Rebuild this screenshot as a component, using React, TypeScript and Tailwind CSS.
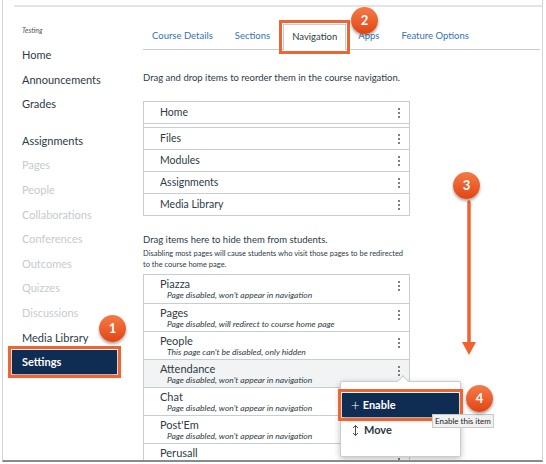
import React from "react";

const font = { fontFamily: "Lato, 'Open Sans', sans-serif" };

function Kebab() {
  return (
    <div className="flex flex-col items-center gap-[2px]">
      <span className="block w-[2px] h-[2px] rounded-full bg-[#555]" />
      <span className="block w-[2px] h-[2px] rounded-full bg-[#555]" />
      <span className="block w-[2px] h-[2px] rounded-full bg-[#555]" />
    </div>
  );
}

function Badge({ n, className }: { n: string; className: string }) {
  return (
    <div
      className={
        "absolute w-[27px] h-[27px] rounded-full bg-gradient-to-b from-[#f47a45] to-[#e1440f] text-white text-[13px] font-bold flex items-center justify-center shadow-[0_2px_3px_rgba(0,0,0,0.35)] " +
        className
      }
    >
      {n}
    </div>
  );
}

const sideTop = ["Home", "Announcements", "Grades"];
const sideMid = [
  { t: "Assignments", on: true },
  { t: "Pages", on: false },
  { t: "People", on: false },
  { t: "Collaborations", on: false },
  { t: "Conferences", on: false },
  { t: "Outcomes", on: false },
  { t: "Quizzes", on: false },
  { t: "Discussions", on: false },
  { t: "Media Library", on: true },
];

const hidden = [
  { t: "Piazza", s: "Page disabled, won't appear in navigation" },
  { t: "Pages", s: "Page disabled, will redirect to course home page" },
  { t: "People", s: "This page can't be disabled, only hidden" },
  { t: "Attendance", s: "Page disabled, won't appear in navigation", hl: true },
  { t: "Chat", s: "Page disabled, won't appear in navigation" },
  { t: "Post'Em", s: "Page disabled, won't appear in navigation" },
  { t: "Perusall", s: "Page disabled, won't appear in navigation" },
];

export default function App() {
  return (
    <div className="w-[546px] h-[464px] bg-white pl-[2px] pr-[3px] pb-[2px]" style={font}>
      <div className="relative h-full border-l border-r border-[#d4d4d4] border-b-2 border-b-[#8a8a8a] overflow-hidden flex flex-col">
        <div className="mt-[5px] ml-[11px] h-[2px] bg-[#e4e4e4] shrink-0" />
        <div className="flex flex-1 min-h-0">
          {/* sidebar */}
          <div className="w-[140px] shrink-0 pt-[18px] text-[#2d3b45]">
            <div className="pl-[19px] text-[7px] italic text-[#555] leading-[10px]">Testing</div>
            <div className="mt-[8px]">
              {sideTop.map((t) => (
                <div key={t} className="pl-[19px] h-[24.6px] flex items-center text-[11px]">
                  {t}
                </div>
              ))}
            </div>
            <div className="mt-[12px]">
              {sideMid.map((i) => (
                <div
                  key={i.t}
                  className={
                    "pl-[19px] h-[24.6px] flex items-center text-[11px] " +
                    (i.on ? "text-[#2d3b45]" : "text-[#c5cbd0]")
                  }
                >
                  {i.t}
                </div>
              ))}
              <div className="ml-[9px] w-[105px] h-[24px] pl-[10px] flex items-center bg-[#0f2c52] text-white text-[11px] font-bold outline-[3px] outline-solid outline-[#ef6433] outline-offset-[1px] shadow-[0_2px_4px_rgba(0,0,0,0.4)]">
                Settings
              </div>
            </div>
          </div>

          {/* main */}
          <div className="flex-1 pt-[17px] pr-[2px]">
            <div className="flex items-end h-[26px] border-b border-[#c7cdd1] text-[9.5px] text-[#3471b5]">
              <div className="px-[9px] h-[26px] flex items-center">Course Details</div>
              <div className="px-[11px] h-[26px] flex items-center ml-[2px]">Sections</div>
              <div className="px-[8px] h-[26px] ml-[2px] flex items-center bg-white border border-b-0 border-[#c7cdd1] text-[#2d3b45] relative top-[1px] outline-[3px] outline-solid outline-[#ef6433] outline-offset-[1px]">
                Navigation
              </div>
              <div className="px-[11px] h-[26px] flex items-center ml-[1px]">Apps</div>
              <div className="px-[11px] h-[26px] flex items-center">Feature Options</div>
            </div>

            <div className="mt-[22px] text-[9.5px] text-[#2d3b45] leading-[12px]">
              Drag and drop items to reorder them in the course navigation.
            </div>

            <div className="mt-[17px] w-[267px] border border-[#c7cdd1] text-[10.5px] text-[#2d3b45]">
              <div className="h-[21px] flex items-center justify-between pl-[16px] pr-[9px]">
                <span>Home</span>
                <Kebab />
              </div>
              <div className="h-[5px] border-t border-b border-[#c7cdd1]" />
              {["Files", "Modules", "Assignments", "Media Library"].map((t, i) => (
                <div
                  key={t}
                  className={
                    "flex items-center justify-between pl-[16px] pr-[9px] " +
                    (i > 0 ? "h-[22px] border-t border-[#c7cdd1]" : "h-[21px]")
                  }
                >
                  <span>{t}</span>
                  <Kebab />
                </div>
              ))}
            </div>

            <div className="mt-[18px] text-[9.5px] text-[#2d3b45] leading-[12px]">
              Drag items here to hide them from students.
            </div>
            <div className="mt-[2px] text-[7.5px] text-[#2d3b45] leading-[11px] w-[268px]">
              Disabling most pages will cause students who visit those pages to be redirected to the course home page.
            </div>

            <div className="mt-[4px] w-[267px] border border-[#c7cdd1] text-[#2d3b45]">
              {hidden.map((r, i) => (
                <div
                  key={r.t}
                  className={
                    "h-[28px] flex items-start justify-between pl-[16px] pr-[9px] pt-[3px] " +
                    (i > 0 ? "border-t border-[#c7cdd1] " : "") +
                    (r.hl ? "bg-[#f2f3f4]" : "")
                  }
                >
                  <div>
                    <div className="text-[11px] leading-[12px]">{r.t}</div>
                    <div className="pl-[7px] text-[8.5px] italic leading-[10px]">{r.s}</div>
                  </div>
                  <div className="pt-[3px]">
                    <Kebab />
                  </div>
                </div>
              ))}
            </div>
          </div>
        </div>

        {/* popup menu */}
        <div className="absolute left-[337px] top-[381px] w-[121px] h-[76px] bg-white border border-[#c7cdd1] rounded-[2px] shadow-[0_2px_6px_rgba(0,0,0,0.25)] pt-[11px]">
          <div className="absolute left-[58px] -top-[5px] w-[8px] h-[8px] bg-white border-l border-t border-[#c7cdd1] rotate-45" />
          <div className="mx-[1px] h-[24px] bg-[#0f2c52] text-white text-[11px] font-bold flex items-center pl-[9px] outline-[3px] outline-solid outline-[#ef6433] outline-offset-[1px] shadow-[0_2px_4px_rgba(0,0,0,0.4)]">
            <span className="text-[15px] font-light mr-[3px] leading-none">+</span>Enable
          </div>
          <div className="mt-[2px] h-[22px] text-[11px] font-bold text-[#2d3b45] flex items-center pl-[11px]">
            <svg width="7" height="11" viewBox="0 0 7 11" className="mr-[5px]">
              <path d="M3.5 0.5 V10.5 M1 3 L3.5 0.5 L6 3 M1 8 L3.5 10.5 L6 8" stroke="#2d3b45" strokeWidth="0.9" fill="none" />
            </svg>
            Move
          </div>
        </div>

        {/* tooltip */}
        <div className="absolute left-[429px] top-[414px] px-[2px] h-[14px] bg-[#f1f1f1] border border-[#c9c9c9] text-[8px] text-[#222] flex items-center leading-none">
          Enable this item
        </div>

        {/* arrow 3 */}
        <svg className="absolute left-[455px] top-[200px]" width="22" height="158" viewBox="0 0 22 158">
          <line x1="11" y1="2" x2="11" y2="146" stroke="#f0622e" strokeWidth="3.5" strokeLinecap="round" />
          <path d="M4 142 L18 142 L11 155 Z" fill="#f0622e" />
        </svg>

        <Badge n="1" className="left-[96px] top-[315px]" />
        <Badge n="2" className="left-[348px] top-[7px]" />
        <Badge n="3" className="left-[450px] top-[172px]" />
        <Badge n="4" className="left-[463px] top-[385px]" />
      </div>
    </div>
  );
}
